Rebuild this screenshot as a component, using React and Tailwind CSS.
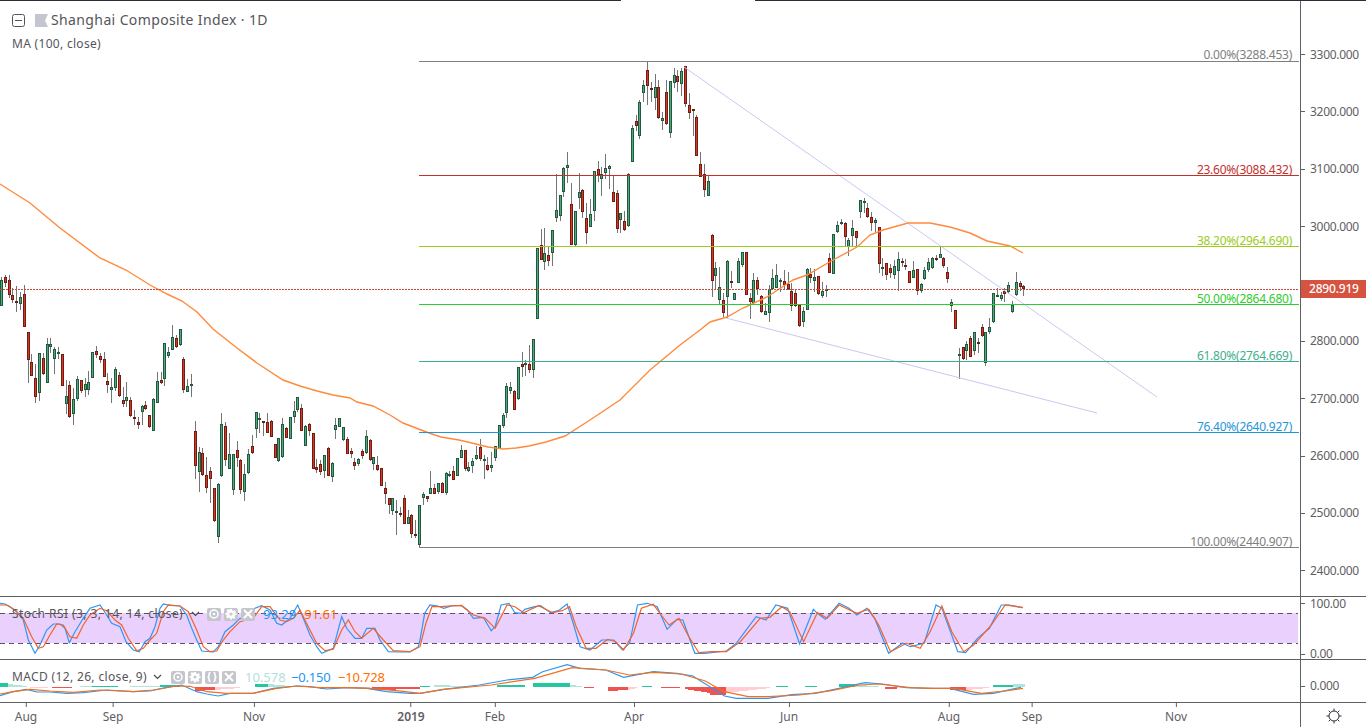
const A = [[3,20,107,30,107,1],[15,15,50,22,38,0],[27,15,85,30,74,0],[37,55,100,76,90,0],[49,48,125,92,95,0],[61,66,120,82,101,1],[73,45,172,72,172,0],[85,187,338,187,269,0],[94,252,317,277,317,0],[106,282,398,325,380,0],[118,250,392,250,368,1],[130,250,315,265,312,0],[142,205,338,223,338,1],[151,205,250,223,230,1],[163,230,312,238,268,1],[175,232,268,246,248,1],[187,253,347,253,347,0],[199,330,432,379,401,1],[208,333,443,346,440,0],[220,355,465,388,433,1],[232,318,392,328,386,1],[244,331,368,331,362,0],[256,325,382,343,361,1],[265,303,375,337,359,1],[277,247,325,247,325,1],[289,228,265,244,254,0],[301,250,278,259,269,0],[313,246,322,268,322,0],[322,310,368,334,344,0],[334,325,398,352,359,1],[346,290,362,298,353,1],[358,305,382,316,379,0],[370,350,412,391,401,0],[379,335,412,382,392,1],[391,380,440,391,439,0],[403,420,466,442,448,0],[415,440,476,457,464,0],[427,405,465,408,425,1],[436,393,420,406,418,0],[448,436,473,436,470,0],[460,385,484,388,484,1],[472,306,400,334,398,1],[484,306,343,331,338,0],[493,220,348,220,328,1],[505,232,264,247,257,1],[517,165,241,202,241,1],[529,195,235,205,230,0],[541,178,228,178,224,1],[550,262,368,268,359,0],[562,327,365,349,365,1],[574,312,380,343,347,1],[586,453,627,484,589,0],[598,532,665,547,605,1],[607,535,617,550,614,0],[619,562,668,616,653,0],[631,590,698,604,626,0],[643,655,755,655,754,0],[655,640,818,643,800,1],[664,430,620,463,619,1],[676,456,587,469,569,0],[688,490,596,553,596,1],[700,553,675,553,661,1],[712,514,590,541,563,0],[721,568,672,571,659,0],[733,583,692,613,665,1],[745,538,612,553,608,1],[757,495,552,529,548,0],[769,427,505,427,476,1],[778,430,490,444,446,1],[790,454,498,454,458,0],[802,430,490,457,488,0],[814,450,500,454,500,0],[826,523,563,523,563,0],[835,505,575,505,572,1],[847,445,563,463,560,1],[859,470,505,475,504,0],[871,442,506,442,506,1],[883,393,458,424,440,1],[892,382,425,382,419,1],[904,403,482,415,482,0],[916,465,527,469,527,1],[928,458,497,463,482,0],[940,490,596,490,596,0],[949,568,610,592,601,0],[961,570,615,583,605,0],[973,556,625,556,602,1],[985,530,617,535,617,0],[997,575,635,580,620,1],[1006,445,507,466,479,1],[1018,445,470,445,470,1],[1030,472,512,472,509,1],[1042,502,551,508,551,0],[1054,535,565,544,551,0],[1063,565,600,577,587,0],[1075,563,587,568,581,1],[1087,538,567,544,557,0],[1099,480,551,499,548,1],[1111,508,572,511,571,0],[1120,562,600,562,581,1],[1132,558,602,586,599,0],[1144,595,647,595,647,0],[1156,636,703,655,671,0],[1168,685,732,685,704,0],[1177,683,735,685,722,1],[1189,690,795,723,725,1],[1201,710,740,729,734,0],[1213,675,763,685,761,0],[1225,720,763,742,761,1],[1234,733,805,736,791,0],[1246,750,805,793,797,0],[1258,706,832,706,824,1]];
const B = [[22,487,525,492,503,1],[34,498,515,498,506,0],[43,423,493,475,491,1],[55,462,493,475,491,0],[67,459,491,459,485,1],[79,455,490,459,490,0],[91,427,495,430,488,1],[100,422,440,431,433,1],[112,408,449,424,449,0],[124,383,437,385,437,1],[136,345,383,361,383,1],[148,361,422,361,416,0],[157,396,425,412,422,1],[169,385,428,394,407,1],[181,348,390,376,386,1],[193,327,392,352,386,0],[205,376,446,387,391,1],[214,380,423,406,421,0],[226,366,425,406,413,1],[238,347,392,349,383,1],[250,286,356,286,356,1],[262,250,293,256,287,1],[271,159,264,169,250,1],[283,155,192,172,182,1],[295,180,239,184,239,0],[307,112,210,112,208,1],[319,66,140,103,112,0],[328,90,138,99,101,1],[340,45,128,103,119,0],[352,28,143,28,121,1]];
const C = [[412,595,808,595,808,1],[424,537,631,584,631,0],[433,535,660,610,635,1],[445,590,648,616,632,0],[457,541,647,541,608,1],[469,372,515,481,503,1],[481,436,513,436,497,1],[490,350,441,354,425,1],[502,306,400,346,353,1],[514,400,584,463,584,0],[526,484,587,484,584,1],[538,369,477,427,445,1],[547,418,503,421,485,0],[559,460,582,505,548,0],[571,448,530,493,530,1],[583,364,513,364,482,1],[595,333,396,358,375,0],[604,352,438,373,386,1],[616,312,387,355,369,1],[628,345,417,349,356,1],[640,378,457,427,455,0],[652,420,548,430,536,0],[661,490,548,490,509,1],[673,483,542,514,539,0],[685,370,530,373,529,1],[697,225,337,235,337,1],[709,195,243,214,227,0],[718,150,267,157,257,1],[730,90,156,106,128,1],[742,35,165,61,109,0],[754,97,157,115,119,0],[766,72,180,112,143,1],[775,90,206,112,203,0],[787,185,239,205,212,1],[799,90,225,127,223,0],[811,94,264,94,248,1],[823,54,115,76,100,1],[832,60,125,79,97,0],[844,55,138,64,101,1],[856,49,170,49,161,0],[868,130,207,164,188,0],[880,178,258,178,182,0],[889,196,317,202,317,0],[901,307,382,343,382,0],[913,342,440,373,421,0],[925,377,439,394,439,1],[937,552,740,555,692,0],[946,636,718,655,677,1]];
const D = [[58,232,345,292,329,1],[70,310,380,331,369,0],[82,210,385,213,320,1],[94,243,295,274,278,0],[103,310,329,310,329,1],[115,205,278,213,278,1],[127,186,230,186,224,1],[139,185,314,187,314,0],[151,310,387,325,335,0],[160,250,342,271,339,1],[172,262,315,271,296,0],[184,315,368,317,365,0],[196,340,374,364,374,1],[208,285,395,296,368,1],[217,238,300,265,298,1],[229,222,295,256,293,1],[241,265,305,271,277,1],[253,240,300,274,284,0],[265,245,300,281,298,0],[274,280,362,304,347,0],[286,300,350,310,349,0],[298,345,412,346,407,0],[310,350,410,364,397,1],[322,235,361,238,361,1],[331,235,280,253,265,0],[343,238,305,262,274,1],[355,259,314,259,313,0],[367,275,325,304,318,1],[379,285,322,297,299,1],[388,190,250,205,250,0],[400,133,253,133,253,1],[412,92,128,106,127,1],[424,88,106,97,103,1],[436,95,170,100,142,0],[445,145,197,151,172,1],[457,90,170,115,139,1],[469,124,172,124,145,0],[481,31,83,31,67,1],[493,25,70,34,37,1],[502,38,85,55,82,0],[514,67,122,82,100,0],[526,85,125,91,100,1],[538,112,248,112,223,0],[547,205,257,231,233,1],[559,218,270,220,256,0],[571,222,265,235,250,0],[583,210,268,229,256,1],[595,186,302,208,244,1],[607,205,230,214,218,0],[616,208,240,225,227,0],[628,244,280,244,280,0],[640,212,265,241,265,1],[652,236,315,238,304,0],[664,280,308,283,304,1],[673,232,270,241,268,1],[685,203,245,217,241,1],[697,200,238,205,235,1],[709,196,212,205,211,0],[721,170,205,193,203,1],[730,200,235,205,227,0],[742,232,278,247,268,0],[754,328,365,337,349,1],[766,361,418,361,418,0],[778,475,567,492,494,1],[790,472,510,472,508,0],[799,453,510,463,482,1],[811,438,502,445,500,0],[823,427,495,427,484,1],[835,445,490,457,460,0],[847,402,442,412,439,0],[856,427,527,427,520,1],[868,384,432,412,425,1],[880,310,400,310,395,1],[892,295,322,316,319,1],[904,306,332,316,326,1],[913,295,335,304,311,0],[925,276,312,286,307,1],[937,334,368,346,367,1],[949,246,317,277,316,1],[961,272,303,280,292,0],[970,285,318,289,298,0]];

const conv = (arr, ox, oy) => arr.map(([x, h, l, t, b, u]) => ({ x: Math.round(ox + x / 3), h: Math.round(oy + h / 3), l: Math.round(oy + l / 3), t: Math.round(oy + t / 3), b: Math.round(oy + b / 3), u }));
const candles = [...conv(A, 0, 270), ...conv(B, 416, 330), ...conv(C, 400, 50), ...conv(D, 700, 190)];

const ma = [[0,184],[30,203],[60,228],[100,258],[126,270],[150,285],[167,294],[182,301],[197,312],[213,329],[237,348],[257,363],[283,380],[300,386],[317,391],[333,395],[350,398],[357,402],[373,406],[390,415],[403,423],[416,428],[429,433],[441,437],[459,440],[476,444],[488,447],[503,449],[516,448],[529,446],[546,442],[565,436],[590,420],[620,400],[650,370],[680,345],[700,330],[710,322],[727,317],[743,308],[767,297],[793,280],[807,275],[833,260],[857,247],[870,235],[883,230],[908,223],[930,223],[950,227],[970,233],[987,241],[1010,246],[1023,253]];

const fibs = [
  { y: 61, c: '#808080', t: '0.00%(3288.453)', ty: 59 },
  { y: 175, c: '#c4302b', t: '23.60%(3088.432)', ty: 174 },
  { y: 246, c: '#9ccc20', t: '38.20%(2964.690)', ty: 245 },
  { y: 304, c: '#2ecc2e', t: '50.00%(2864.680)', ty: 303 },
  { y: 361, c: '#3fae8c', t: '61.80%(2764.669)', ty: 360 },
  { y: 432, c: '#1e96d8', t: '76.40%(2640.927)', ty: 431 },
  { y: 547, c: '#808080', t: '100.00%(2440.907)', ty: 546 },
];

const z = (lst, f) => lst.map(([x, y]) => [f ? 420 + x / 2.529 : x / 3, 590 + y / 3]);
const stochBlue = [...z([[0,40],[15,42],[30,50],[50,65],[70,90],[85,150],[105,190],[120,165],[140,120],[160,102],[180,102],[195,115],[208,158],[225,125],[250,85],[270,55],[300,45],[320,75],[335,100],[360,110],[378,155],[400,180],[418,185],[435,155],[450,145],[465,110],[480,55],[490,42],[510,46],[540,48],[560,75],[575,115],[590,150],[605,183],[640,186],[655,170],[675,125],[700,105],[720,85],[745,88],[765,55],[785,47],[810,60],[830,100],[845,105],[870,85],[893,45],[910,85],[930,135],[950,170],[965,190],[1000,175],[1025,80],[1040,115],[1065,145],[1085,145],[1100,115],[1125,115],[1140,150],[1165,185],[1200,186],[1230,186],[1255,170]]),
  ...z([[0,150],[12,70],[25,45],[45,48],[60,55],[80,48],[105,46],[120,60],[135,85],[160,82],[180,122],[190,110],[205,45],[225,40],[240,68],[255,70],[265,58],[290,50],[305,47],[330,68],[350,62],[372,42],[385,90],[405,170],[430,180],[460,150],[490,150],[512,180],[530,160],[550,45],[575,40],[600,50],[625,118],[650,88],[665,90],[695,190],[720,190],[775,183],[800,160],[850,80],[875,90],[900,45],[930,55],[960,162],[995,58],[1005,70],[1025,88],[1060,40],[1085,55],[1105,75],[1130,55],[1150,85],[1185,190],[1220,160],[1240,170],[1275,160],[1305,45],[1320,55],[1360,185],[1380,188],[1410,145],[1440,115],[1470,45],[1490,45],[1525,53]], true)];
const stochOrange = [...z([[0,45],[20,45],[45,60],[70,85],[95,140],[115,175],[130,170],[150,135],[170,102],[190,105],[210,140],[230,145],[250,105],[270,75],[300,55],[320,62],[345,90],[365,105],[385,145],[410,182],[430,175],[450,150],[470,130],[490,65],[505,45],[540,48],[565,65],[590,120],[610,170],[630,185],[650,183],[670,150],[690,125],[720,95],[760,85],[785,50],[810,50],[840,90],[860,95],[880,85],[900,60],[925,110],[950,160],[975,182],[1000,178],[1025,120],[1045,90],[1065,125],[1085,145],[1120,115],[1150,150],[1180,182],[1230,185],[1260,170]]),
  ...z([[0,170],[15,100],[30,50],[55,50],[85,47],[105,47],[135,75],[165,85],[190,115],[205,80],[220,45],[240,50],[262,68],[300,47],[335,68],[360,62],[378,50],[395,110],[420,175],[445,175],[475,148],[495,155],[515,180],[540,130],[560,55],[590,43],[610,75],[630,105],[655,85],[680,140],[705,188],[740,185],[775,185],[810,155],[860,85],[885,82],[915,50],[935,65],[970,155],[1005,68],[1030,85],[1060,45],[1105,70],[1135,58],[1160,105],[1190,185],[1230,160],[1265,175],[1290,125],[1320,48],[1345,125],[1375,185],[1400,165],[1445,105],[1480,45],[1525,53]], true)];
const macdBlue = [...z([[0,317],[40,305],[80,298],[110,306],[150,306],[200,310],[250,308],[320,300],[400,305],[450,303],[500,292],[545,285],[590,305],[620,312],[655,318],[690,310],[760,310],[820,295],[890,288],[930,290],[980,297],[1040,293],[1100,295],[1160,305],[1230,310]]),
  ...z([[0,310],[60,298],[150,285],[220,270],[285,262],[310,245],[372,224],[405,235],[470,240],[515,262],[590,245],[650,250],[690,258],[770,318],[800,325],[880,325],[940,314],[1000,310],[1060,295],[1125,278],[1170,282],[1230,293],[1290,295],[1340,295],[1400,313],[1450,310],[1520,292]], true)];
const macdOrange = [...z([[0,312],[40,305],[90,298],[150,303],[220,307],[300,300],[400,305],[460,300],[530,288],[570,289],[620,305],[680,310],[760,310],[830,295],[890,288],[960,293],[1040,293],[1110,295],[1190,302]]),
  ...z([[0,310],[60,298],[180,285],[290,265],[385,233],[470,240],[530,255],[590,247],[660,252],[720,272],[770,305],[830,320],[880,320],[960,315],[1040,302],[1110,285],[1160,282],[1240,293],[1300,295],[1350,295],[1420,310],[1480,303],[1525,295]], true)];

const T = '#26c6a0', TL = '#b2e5d8', R = '#ef5350', RL = '#ffcdd2';
const hist = [[0,8,4,4,T],[8,27,3,1,TL],[30,48,-1,-1,RL],[52,72,-1,-1,R],[80,92,1,1,TL],[92,118,1,1,T],[130,160,1,1,TL],[160,180,2,2,T],[195,215,-4,-3,R],[215,240,-3,-1,RL],[255,268,3,3,T],[268,290,3,1,TL],[320,330,-2,-1,R],[330,370,-1,-1,RL],[372,420,-3,-2,R],
  [420,430,1,1,T],[434,465,2,1,TL],[497,525,2,2,T],[533,546,4,4,T],[546,570,4,4,T],[570,582,2,1,TL],[584,594,-1,-1,R],[608,628,-4,-3,R],[628,637,-3,-1,RL],[642,652,1,1,T],[661,680,-1,-1,R],[685,710,-2,-6,R],[710,726,-8,-8,R],[726,770,-6,-1,RL],[776,788,1,1,T],[805,817,1,1,T],[839,855,3,3,T],[855,879,2,1,TL],[885,897,-2,-2,R],[897,914,-1,-1,RL],[950,966,-3,-3,R],[966,989,-3,-1,RL],[993,1013,2,2,T],[1013,1025,3,3,TL]];

const pts = (a) => a.map(([x, y]) => `${x.toFixed(1)},${y.toFixed(1)}`).join(' ');

function Candle({ c }) {
  const dark = c.u ? '#1d5a3e' : '#701c12';
  const fill = c.u ? '#54a57c' : '#d33a26';
  const h = Math.max(c.b - c.t, 2);
  return (
    <g>
      <rect x={c.x} y={c.h} width="1" height={c.l - c.h} fill="#747474" />
      <rect x={c.x - 1} y={c.t} width="3" height={h} fill={dark} />
      {h > 2 && <rect x={c.x} y={c.t + 1} width="1" height={h - 2} fill={fill} />}
    </g>
  );
}

const priceTicks = [3300, 3200, 3100, 3000, 2800, 2700, 2600, 2500, 2400].map((p) => ({ y: 54.5 + (3300 - p) * 0.5737, t: `${p}.000` }));
const timeTicks = [[26, 'Aug'], [113, 'Sep'], [254, 'Nov'], [411, '2019', true], [495, 'Feb'], [634, 'Apr'], [789, 'Jun'], [949, 'Aug'], [1032, 'Sep'], [1176, 'Nov']];

function AxisTick({ y, t, top }) {
  return (
    <div className="absolute left-0 flex items-center h-[14px] -translate-y-1/2" style={{ top: y - top }}>
      <span className="w-[4px] h-px bg-[#5f6064]" />
      <span className="ml-[5px] text-[12px] leading-[14px] text-[#5f6064] tracking-[-0.3px]">{t}</span>
    </div>
  );
}

function Box({ children }) {
  return <span className="flex items-center justify-center w-[14px] h-[13px] rounded-[2px] bg-[#c5c6cd]">{children}</span>;
}
const Eye = () => (
  <svg width="12" height="12" viewBox="0 0 12 12"><circle cx="6" cy="6" r="4" fill="none" stroke="#fff" strokeWidth="1.5" /><circle cx="6" cy="6" r="1.3" fill="#fff" /></svg>
);
const Gear = () => (
  <svg width="12" height="12" viewBox="0 0 12 12"><path d="M5 1h2l.3 1.4 1.2.5 1.2-.8 1.2 1.4-.8 1.2.4 1.1L11.5 5v2l-1.5.3-.4 1.1.8 1.2-1.3 1.3-1.2-.8-1.1.4L7 11.5H5l-.3-1.5-1.1-.4-1.2.8-1.3-1.3.8-1.2-.4-1.1L.5 7V5L2 4.7l.4-1.1-.8-1.2L2.9 1.1l1.2.8 .6-.3z" fill="#fff" fillRule="evenodd" /><circle cx="6" cy="6" r="1.6" fill="#c5c6cd" /></svg>
);
const Cross = () => (
  <svg width="12" height="12" viewBox="0 0 12 12"><path d="M2 2l8 8M10 2l-8 8" stroke="#fff" strokeWidth="2" /></svg>
);
const Braces = () => (
  <svg width="12" height="12" viewBox="0 0 12 12" fill="none" stroke="#fff" strokeWidth="1.6"><path d="M4.5 1.5C3 1.5 3 2.5 3 4s-.5 2-1.5 2C2.5 6 3 6.500 3 8s0 2.500 1.500 2.500" /><path d="M7.500 1.500C9 1.500 9 2.500 9 4s.5 2 1.500 2c-1 0-1.500.5-1.500 2s0 2.500-1.500 2.500" /></svg>
);
const Chevron = () => (
  <svg width="9" height="6" viewBox="0 0 9 6" fill="none" stroke="#4a4a4e" strokeWidth="1.2"><path d="M1 1l3.500 3.500L8 1" /></svg>
);

export default function App() {
  return (
    <div className="w-[1366px] h-[727px] flex flex-col bg-white overflow-hidden font-['Noto_Sans',sans-serif]">
      <div className="flex h-px shrink-0">
        <div className="w-[621px] bg-[#2a2e39]" />
        <div className="w-[134px]" />
        <div className="flex-1 bg-[#2a2e39]" />
      </div>

      <div className="flex h-[595px] shrink-0">
        <div className="relative w-[1300px]">
          <svg width="1300" height="595" viewBox="0 1 1300 595" className="block">
            <g shapeRendering="crispEdges">
              {candles.map((c, i) => <Candle key={i} c={c} />)}
            </g>
            <line x1="684" y1="67" x2="1157" y2="397" stroke="#c8c8f2" />
            <line x1="726" y1="318" x2="1097" y2="413" stroke="#c8c8f2" />
            <polyline points={pts(ma)} fill="none" stroke="#ff8a3c" strokeWidth="1.4" />
            <g shapeRendering="crispEdges">
              {fibs.map((f) => <line key={f.y} x1="419" x2="1299" y1={f.y + 0.5} y2={f.y + 0.5} stroke={f.c} />)}
              <line x1="0" x2="1299" y1="289.500" y2="289.500" stroke="#c9483a" strokeDasharray="2 1" />
            </g>
            {fibs.map((f) => (
              <text key={f.t} x="1292" y={f.ty} textAnchor="end" fontSize="12" letterSpacing="-0.25" fill={f.c}>{f.t}</text>
            ))}
          </svg>
          <div className="absolute left-[12px] top-[12px] flex items-center">
            <svg width="13" height="13" viewBox="0 0 13 13" fill="none" stroke="#53535a"><rect x="0.500" y="0.500" width="12" height="12" rx="2" /><path d="M3 6.500h7" /></svg>
            <svg width="13" height="13" viewBox="0 0 13 13" className="ml-[10px]"><path d="M0 0h13l-3 6.500 3 6.500H0z" fill="#c5c5d2" /></svg>
            <span className="ml-[3px] text-[14px] leading-[14px] text-[#55555a] tracking-[0.38px]">Shanghai Composite Index · 1D</span>
          </div>
          <div className="absolute left-[12px] top-[36px] text-[12px] leading-[14px] text-[#55555a] tracking-[0.3px]">MA (100, close)</div>
        </div>
        <div className="relative flex-1 border-l border-[#5f6064]">
          {priceTicks.map((p) => <AxisTick key={p.t} y={p.y} t={p.t} top={1} />)}
          <div className="absolute left-0 right-0 top-[279px] h-[18px] bg-[#d5533f] flex items-center pl-[8px] text-[12px] font-medium text-white tracking-[-0.2px]">2890.919</div>
        </div>
      </div>

      <div className="flex h-[63px] shrink-0 border-t border-[#5f6064]">
        <div className="relative w-[1300px]">
          <svg width="1300" height="62" viewBox="0 597 1300 62" className="block">
            <rect x="0" y="613" width="1298" height="30" fill="#ead0fd" shapeRendering="crispEdges" />
            <line x1="0" x2="1298" y1="613.500" y2="613.500" stroke="#5e5066" strokeDasharray="5 4" />
            <line x1="0" x2="1298" y1="643.500" y2="643.500" stroke="#5e5066" strokeDasharray="5 4" />
            <polyline points={pts(stochBlue)} fill="none" stroke="#3296f0" strokeWidth="1.2" />
            <polyline points={pts(stochOrange)} fill="none" stroke="#f2632a" strokeWidth="1.2" />
          </svg>
          <div className="absolute left-[12px] top-[10px] flex items-center h-[14px] text-[12px] leading-[14px]">
            <span className="text-[#55555a] w-[176px] whitespace-nowrap tracking-[0.42px]">Stoch RSI (3, 3, 14, 14, close)</span>
            <span className="ml-[3px] w-[16px]"><Chevron /></span>
            <span className="flex gap-[3px]"><Box><Eye /></Box><Box><Gear /></Box><Box><Cross /></Box></span>
            <span className="ml-[8px] text-[#2196f3] text-[13px]">93.29</span>
            <span className="ml-[8px] text-[#ff6d00] text-[13px]">91.61</span>
          </div>
        </div>
        <div className="relative flex-1 border-l border-[#5f6064]">
          <AxisTick y={603.7} t="100.00" top={597} />
          <AxisTick y={654} t="0.00" top={597} />
        </div>
      </div>

      <div className="flex h-[43px] shrink-0 border-t border-[#5f6064]">
        <div className="relative w-[1300px]">
          <svg width="1300" height="42" viewBox="0 660 1300 42" className="block">
            <g shapeRendering="crispEdges">
              {hist.map(([a, b, h0, h1, c], i) => {
                const base = 687;
                const top0 = h0 > 0 ? base - h0 : base;
                const bot0 = h0 > 0 ? base : base - h0;
                const top1 = h1 > 0 ? base - h1 : base;
                const bot1 = h1 > 0 ? base : base - h1;
                return <polygon key={i} points={`${a},${top0} ${b},${top1} ${b},${bot1} ${a},${bot0}`} fill={c} />;
              })}
            </g>
            <polyline points={pts(macdBlue)} fill="none" stroke="#3296f0" strokeWidth="1.2" />
            <polyline points={pts(macdOrange)} fill="none" stroke="#f2701f" strokeWidth="1.2" />
          </svg>
          <div className="absolute left-[12px] top-[10px] flex items-center h-[14px] text-[12px] leading-[14px]">
            <span className="text-[#55555a] w-[137px] whitespace-nowrap tracking-[0.35px]">MACD (12, 26, close, 9)</span>
            <span className="ml-[4px] w-[18px]"><Chevron /></span>
            <span className="flex gap-[3px]"><Box><Eye /></Box><Box><Gear /></Box><Box><Braces /></Box><Box><Cross /></Box></span>
            <span className="ml-[9px] w-[38px] text-[#b2dfdb] text-[13px]">10.578</span>
            <span className="ml-[8px] w-[40px] text-[#2196f3] text-[13px] tracking-[-0.2px]">−0.150</span>
            <span className="ml-[7px] text-[#ff6d00] text-[13px] tracking-[-0.2px]">−10.728</span>
          </div>
        </div>
        <div className="relative flex-1 border-l border-[#5f6064]">
          <AxisTick y={686.3} t="0.000" top={660} />
        </div>
      </div>

      <div className="flex flex-1 border-t border-[#5f6064]">
        <div className="relative w-[1300px]">
          {timeTicks.map(([x, t, b]) => (
            <div key={t + x} className="absolute top-0 flex flex-col items-center -translate-x-1/2" style={{ left: x }}>
              <span className="w-px h-[4px] bg-[#5f6064]" />
              <span className={`mt-[3px] text-[12px] leading-[14px] text-[#5f6064] ${b ? 'font-semibold' : ''}`}>{t}</span>
            </div>
          ))}
        </div>
        <div className="flex-1 border-l border-[#5f6064] flex items-center justify-center">
          <svg width="16" height="16" viewBox="0 0 16 16" fill="none" stroke="#2a2e39" strokeWidth="1" className="translate-y-[1px]">
            <circle cx="8" cy="8" r="5" />
            <path d="M8 0.500v2.500M8 13v2.500M0.500 8h2.500M13 8h2.500M2.700 2.700l1.800 1.800M11.500 11.500l1.800 1.800M13.300 2.700l-1.800 1.800M4.500 11.500l-1.800 1.800" />
          </svg>
        </div>
      </div>
    </div>
  );
}
